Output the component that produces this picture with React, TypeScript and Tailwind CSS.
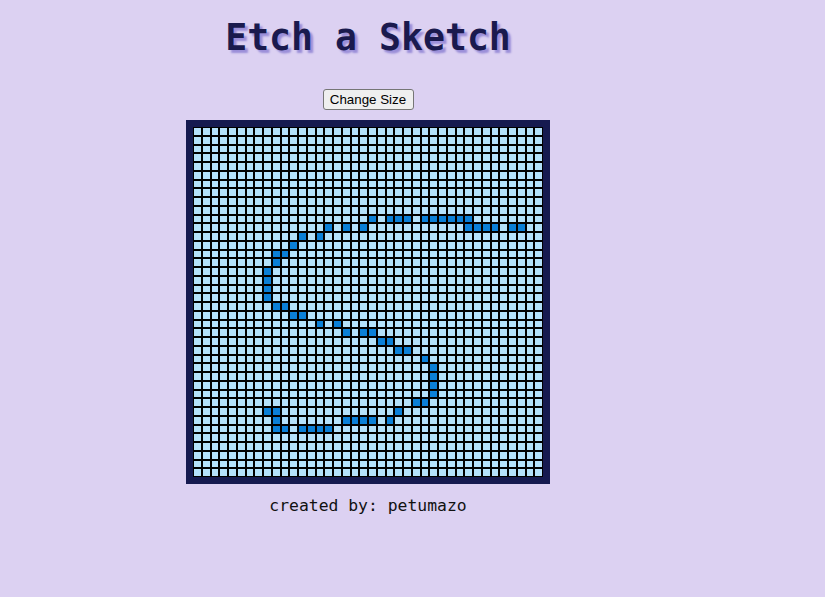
import React, { FC } from 'react';

const SIZE = 40;

// cells that were drawn on, as row -> columns
const drawn: Record<number, number[]> = {
  10: [20, 22, 23, 24, 26, 27, 28, 29, 30, 31],
  11: [15, 17, 19, 31, 32, 33, 34, 36, 37],
  12: [12, 14],
  13: [11],
  14: [9, 10],
  15: [9],
  16: [8],
  17: [8],
  18: [8],
  19: [8],
  20: [9, 10],
  21: [11, 12],
  22: [14, 16],
  23: [17, 19, 20],
  24: [21, 22],
  25: [23, 24],
  26: [26],
  27: [27],
  28: [27],
  29: [27],
  30: [27],
  31: [25, 26],
  32: [8, 9, 23],
  33: [9, 17, 18, 19, 20, 22],
  34: [9, 10, 12, 13, 14, 15],
};

const Grid: FC = () => {
  const cells = [];
  for (let r = 0; r < SIZE; r++) {
    for (let c = 0; c < SIZE; c++) {
      const on = drawn[r]?.includes(c);
      cells.push(
        <div
          key={`${r}-${c}`}
          className={on ? 'border border-black bg-[#0b7fd7]' : 'border border-black bg-[#b4e1fb]'}
        />,
      );
    }
  }
  return (
    <div className="mt-[10px] border-[7px] border-[#161a50]">
      <div className="grid h-[350px] w-[350px] grid-cols-[repeat(40,1fr)] grid-rows-[repeat(40,1fr)]">{cells}</div>
    </div>
  );
};

const App: FC = () => (
  <div className="min-h-[597px] w-full bg-[#dcd1f2]">
    <div className="flex w-[736px] flex-col items-center">
      <h1 className="mt-[16px] font-['DejaVu_Sans_Mono',monospace] text-[36.5px] leading-[44px] font-bold text-[#1a1a4e] [text-shadow:3px_3px_2px_#9a8ed8]">
        Etch a Sketch
      </h1>
      <button
        type="button"
        className="mt-[29px] h-[21px] w-[91px] rounded-[3px] border border-[#767676] bg-[#efefef] font-['Liberation_Sans',Arial,sans-serif] text-[13.33px] leading-none text-black"
      >
        Change Size
      </button>
      <Grid />
      <p className="mt-[12px] font-['DejaVu_Sans_Mono',monospace] text-[16.4px] leading-[20px] text-[#111]">
        created by: petumazo
      </p>
    </div>
  </div>
);

export default App;
